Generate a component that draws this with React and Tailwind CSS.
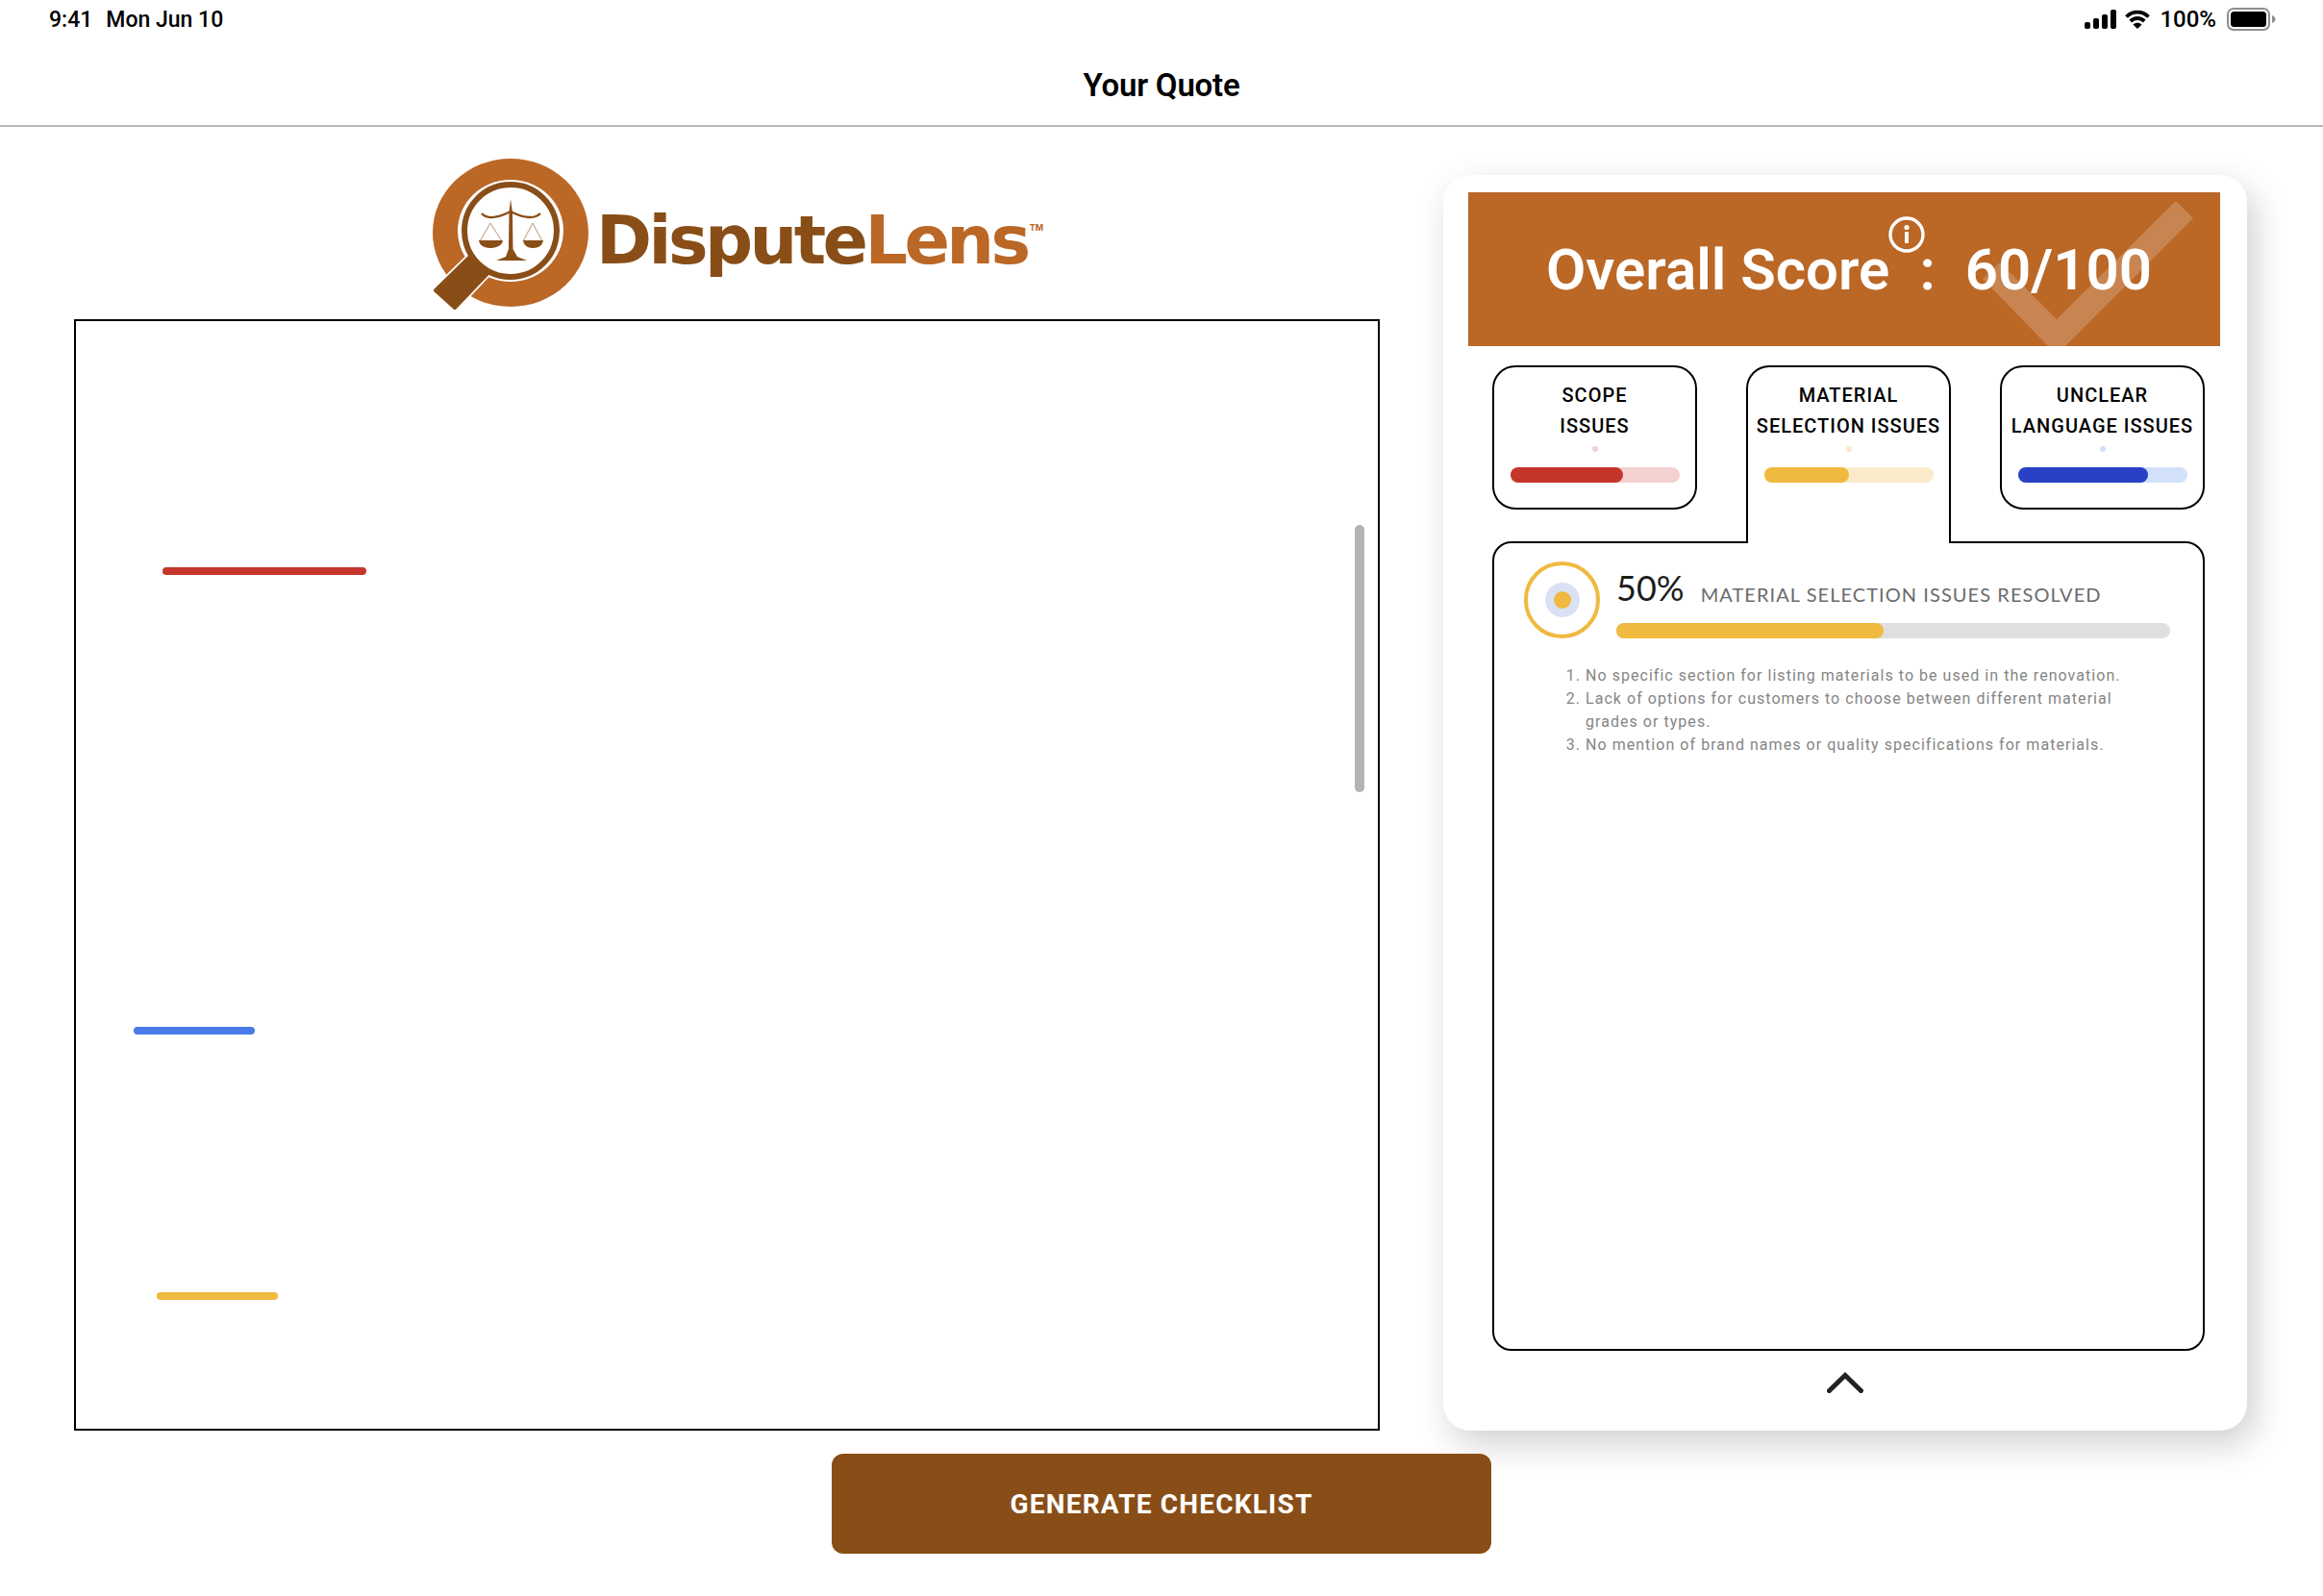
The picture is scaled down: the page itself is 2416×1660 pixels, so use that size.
import React from "react";

const tabs = [
  { lines: ["SCOPE", "ISSUES"], dot: "bg-[#F5D0D0]", track: "bg-[#F5D0D0]", fill: "bg-[#C5352C]", pct: 67 },
  { lines: ["MATERIAL", "SELECTION ISSUES"], dot: "bg-[#FBEBCB]", track: "bg-[#FBEBCB]", fill: "bg-[#F0B93F]", pct: 50, active: true },
  { lines: ["UNCLEAR", "LANGUAGE ISSUES"], dot: "bg-[#D3E0FA]", track: "bg-[#D3E0FA]", fill: "bg-[#2841C6]", pct: 77 },
];

const issues = [
  "No specific section for listing materials to be used in the renovation.",
  "Lack of options for customers to choose between different material grades or types.",
  "No mention of brand names or quality specifications for materials.",
];

const StatusIcons = () => (
  <div className="flex items-center pt-[2px]">
    {/* signal */}
    <svg width="33" height="20" viewBox="0 0 33 20" fill="#000">
      <rect x="0" y="13" width="6" height="7" rx="2" />
      <rect x="9" y="9" width="6" height="11" rx="2" />
      <rect x="18" y="5" width="6" height="15" rx="2" />
      <rect x="27" y="0" width="6" height="20" rx="2" />
    </svg>
    {/* wifi */}
    <svg className="ml-[9px]" width="26" height="20" viewBox="0 0 26 20" fill="none" stroke="#000" strokeWidth="3.8">
      <path d="M1.5 7.5 C8 1 18 1 24.5 7.5" />
      <path d="M5.8 12 C10 8 16 8 20.2 12" />
      <path d="M13 20 L8.4 15.4 C11 13.2 15 13.2 17.6 15.4 Z" fill="#000" stroke="none" />
    </svg>
    <span className="ml-[10px] text-[24px] font-medium leading-none text-black">100%</span>
    {/* battery */}
    <svg className="ml-[11px]" width="51" height="24" viewBox="0 0 51 24" fill="none">
      <rect x="1" y="1" width="43" height="22" rx="6" stroke="#8E8E8E" strokeWidth="2" />
      <rect x="4" y="4" width="37" height="16" rx="3.5" fill="#000" />
      <path d="M47 8 C49.5 9 50.5 10.5 50.5 12 C50.5 13.5 49.5 15 47 16 Z" fill="#8E8E8E" />
    </svg>
  </div>
);

const Logo = () => (
  <div className="flex h-[177px] items-start pl-[364px]">
    <svg className="shrink-0" width="190" height="177" viewBox="0 0 190 177">
      <ellipse cx="90" cy="87" rx="81" ry="77" fill="#BB6726" />
      <ellipse cx="90" cy="85" rx="55" ry="53" fill="#fff" />
      {/* handle runs under the inner ring */}
      <path d="M12 147 L46 114 L64 131 L32 165 Z" fill="#fff" stroke="#fff" strokeWidth="8" strokeLinejoin="round" />
      <path d="M12 147 L56 104 L74 121 L32 165 Z" fill="#894E17" stroke="#894E17" strokeWidth="4" strokeLinejoin="round" />
      <ellipse cx="90" cy="85" rx="48" ry="48" fill="#fff" stroke="#894E17" strokeWidth="6" />
      {/* scales */}
      <path d="M90 52 L92 66 L92.5 104 L97 112 L107 116 L75 116 L85 112 L88 104 L88.5 66 Z" fill="#894E17" />
      <path d="M60 67 C66 74 78 71 90 65 C102 71 114 74 121 67" fill="none" stroke="#894E17" strokeWidth="2.4" />
      <path d="M69 77 L58 96 M69 77 L81 96 M113 77 L103 96 M113 77 L123 96" stroke="#C9AC92" strokeWidth="1.2" fill="none" />
      <path d="M57 95 L82 95 C81 101 75 103 69 103 C63 103 58 101 57 95 Z" fill="#894E17" />
      <path d="M103 95 L124 95 C123 101 119 103 113 103 C108 103 104 101 103 95 Z" fill="#894E17" />
    </svg>
    <div className="-ml-[11px] mt-[60px] whitespace-nowrap font-['DejaVu_Sans',sans-serif] text-[70px] font-bold leading-none tracking-[-3.6px]">
      <span className="text-[#894E17]">Dispute</span>
      <span className="text-[#BB6726]">Lens</span>
      <span className="ml-[2px] align-[34px] font-['Inter',sans-serif] text-[9px] font-bold tracking-normal text-[#BB6726]">TM</span>
    </div>
  </div>
);

const Tab = ({ lines, dot, track, fill, pct, active }) => (
  <div
    className={
      active
        ? "relative z-10 flex h-[185px] w-[213px] flex-col items-center rounded-t-[24px] border-2 border-b-0 border-black bg-white pt-[13px]"
        : "flex h-[150px] w-[213px] flex-col items-center rounded-[24px] border-2 border-black bg-white pt-[13px]"
    }
  >
    {lines.map((l) => (
      <div key={l} className="whitespace-nowrap text-[20px] font-medium leading-[32px] tracking-[1px] text-black">
        {l}
      </div>
    ))}
    <div className={`mt-[5px] h-[6px] w-[6px] rounded-full ${dot}`} />
    <div className={`mt-[16px] h-[16px] w-[176px] rounded-full ${track}`}>
      <div className={`h-full rounded-full ${fill}`} style={{ width: `${pct}%` }} />
    </div>
  </div>
);

export default function App() {
  return (
    <div className="h-[1660px] w-[2416px] overflow-hidden bg-white font-['Roboto',sans-serif]">
      {/* status bar */}
      <div className="flex h-[38px] items-center justify-between pl-[51px] pr-[49px]">
        <div className="flex gap-[14px] pt-[2px] text-[23px] font-medium leading-none text-black">
          <span>9:41</span>
          <span>Mon Jun 10</span>
        </div>
        <StatusIcons />
      </div>

      <div className="flex h-[94px] items-center justify-center border-b-2 border-[#B8B8B8] pt-[8px]">
        <h1 className="text-[33px] font-semibold leading-none tracking-[-0.2px] text-black">Your Quote</h1>
      </div>

      <div className="flex gap-[66px] pl-[77px] pt-[23px]">
        {/* left column */}
        <div className="w-[1358px]">
          <Logo />
          <div className="relative h-[1156px] border-2 border-black bg-white">
            <div className="absolute left-[90px] top-[256px] h-[8px] w-[212px] rounded-full bg-[#C5352C]" />
            <div className="absolute left-[60px] top-[734px] h-[8px] w-[126px] rounded-full bg-[#4A7AE8]" />
            <div className="absolute left-[84px] top-[1010px] h-[8px] w-[126px] rounded-full bg-[#F0B93F]" />
            <div className="absolute left-[1330px] top-[212px] h-[278px] w-[10px] rounded-full bg-[#B3B3B3]" />
          </div>
        </div>

        {/* score card */}
        <div className="mt-[27px] h-[1306px] w-[836px] rounded-[28px] bg-white pl-[26px] pr-[28px] pt-[18px] shadow-[8px_14px_36px_rgba(0,0,0,0.19)]">
          <div className="relative flex h-[160px] items-center overflow-hidden bg-[#BB6726] pl-[81px] pt-[2px]">
            <svg className="absolute left-0 top-0" width="782" height="160" viewBox="0 0 782 160">
              <polygon points="736,9 754,27 612,169 535,90 553,73 612,132" fill="#fff" fillOpacity="0.2" />
            </svg>
            <span className="relative text-[60px] font-semibold leading-none text-white">Overall Score</span>
            <span className="absolute left-[437px] top-[25px] flex h-[38px] w-[38px] items-center justify-center">
              <svg width="38" height="38" viewBox="0 0 38 38" fill="none">
                <circle cx="19" cy="19" r="17" stroke="#fff" strokeWidth="3.4" />
                <circle cx="19" cy="11.5" r="2.6" fill="#fff" />
                <rect x="17" y="16" width="4" height="12" rx="1" fill="#fff" />
              </svg>
            </span>
            <span className="relative ml-[31px] text-[60px] font-semibold leading-none text-white">:</span>
            <span className="relative ml-[31px] text-[60px] font-semibold leading-none text-white">60/100</span>
          </div>

          <div className="ml-[25px] mr-[16px] mt-[20px]">
            <div className="-mb-[2px] flex h-[185px] items-start justify-between">
              {tabs.map((t) => (
                <Tab key={t.lines[0]} {...t} />
              ))}
            </div>

            <div className="h-[842px] rounded-[20px] border-2 border-black bg-white pl-[31px] pt-[19px]">
              <div className="flex gap-[17px]">
                <div className="flex h-[80px] w-[79px] shrink-0 items-center justify-center rounded-full border-4 border-[#F0B93F]">
                  <div className="flex h-[36px] w-[36px] items-center justify-center rounded-full bg-[#DAE1F3]">
                    <div className="h-[18px] w-[18px] rounded-full bg-[#F0B93F]" />
                  </div>
                </div>
                <div className="w-[576px]">
                  <div className="flex h-[64px] items-baseline pt-[5px] font-['Lato',sans-serif]">
                    <span className="text-[36px] leading-[44px] text-[#1c1c1c]">50%</span>
                    <span className="ml-[17px] translate-y-[1px] text-[20px] leading-none tracking-[1.06px] text-[#6b6b6b]">
                      MATERIAL SELECTION ISSUES RESOLVED
                    </span>
                  </div>
                  <div className="h-[16px] w-full rounded-full bg-[#DFDFDF]">
                    <div className="h-full w-[48.3%] rounded-full bg-[#F0B93F]" />
                  </div>
                </div>
              </div>
              <ol className="ml-[64px] mt-[27px] w-[592px] list-decimal text-[16px] leading-[24px] tracking-[1.04px] text-[#858585]">
                {issues.map((i) => (
                  <li key={i}>{i}</li>
                ))}
              </ol>
            </div>

            <div className="mt-[22px] flex justify-center pr-[8px]">
              <svg width="38" height="22" viewBox="0 0 38 22" fill="none" stroke="#222" strokeWidth="5" strokeLinecap="round">
                <path d="M2.5 19.5 L19 3.5 L35.5 19.5" />
              </svg>
            </div>
          </div>
        </div>
      </div>

      <div className="mt-[24px] flex justify-center">
        <button className="h-[104px] w-[686px] rounded-[12px] bg-[#894E17] pt-[1px] text-[28px] font-bold leading-none tracking-[1.2px] text-white">
          GENERATE CHECKLIST
        </button>
      </div>
    </div>
  );
}
